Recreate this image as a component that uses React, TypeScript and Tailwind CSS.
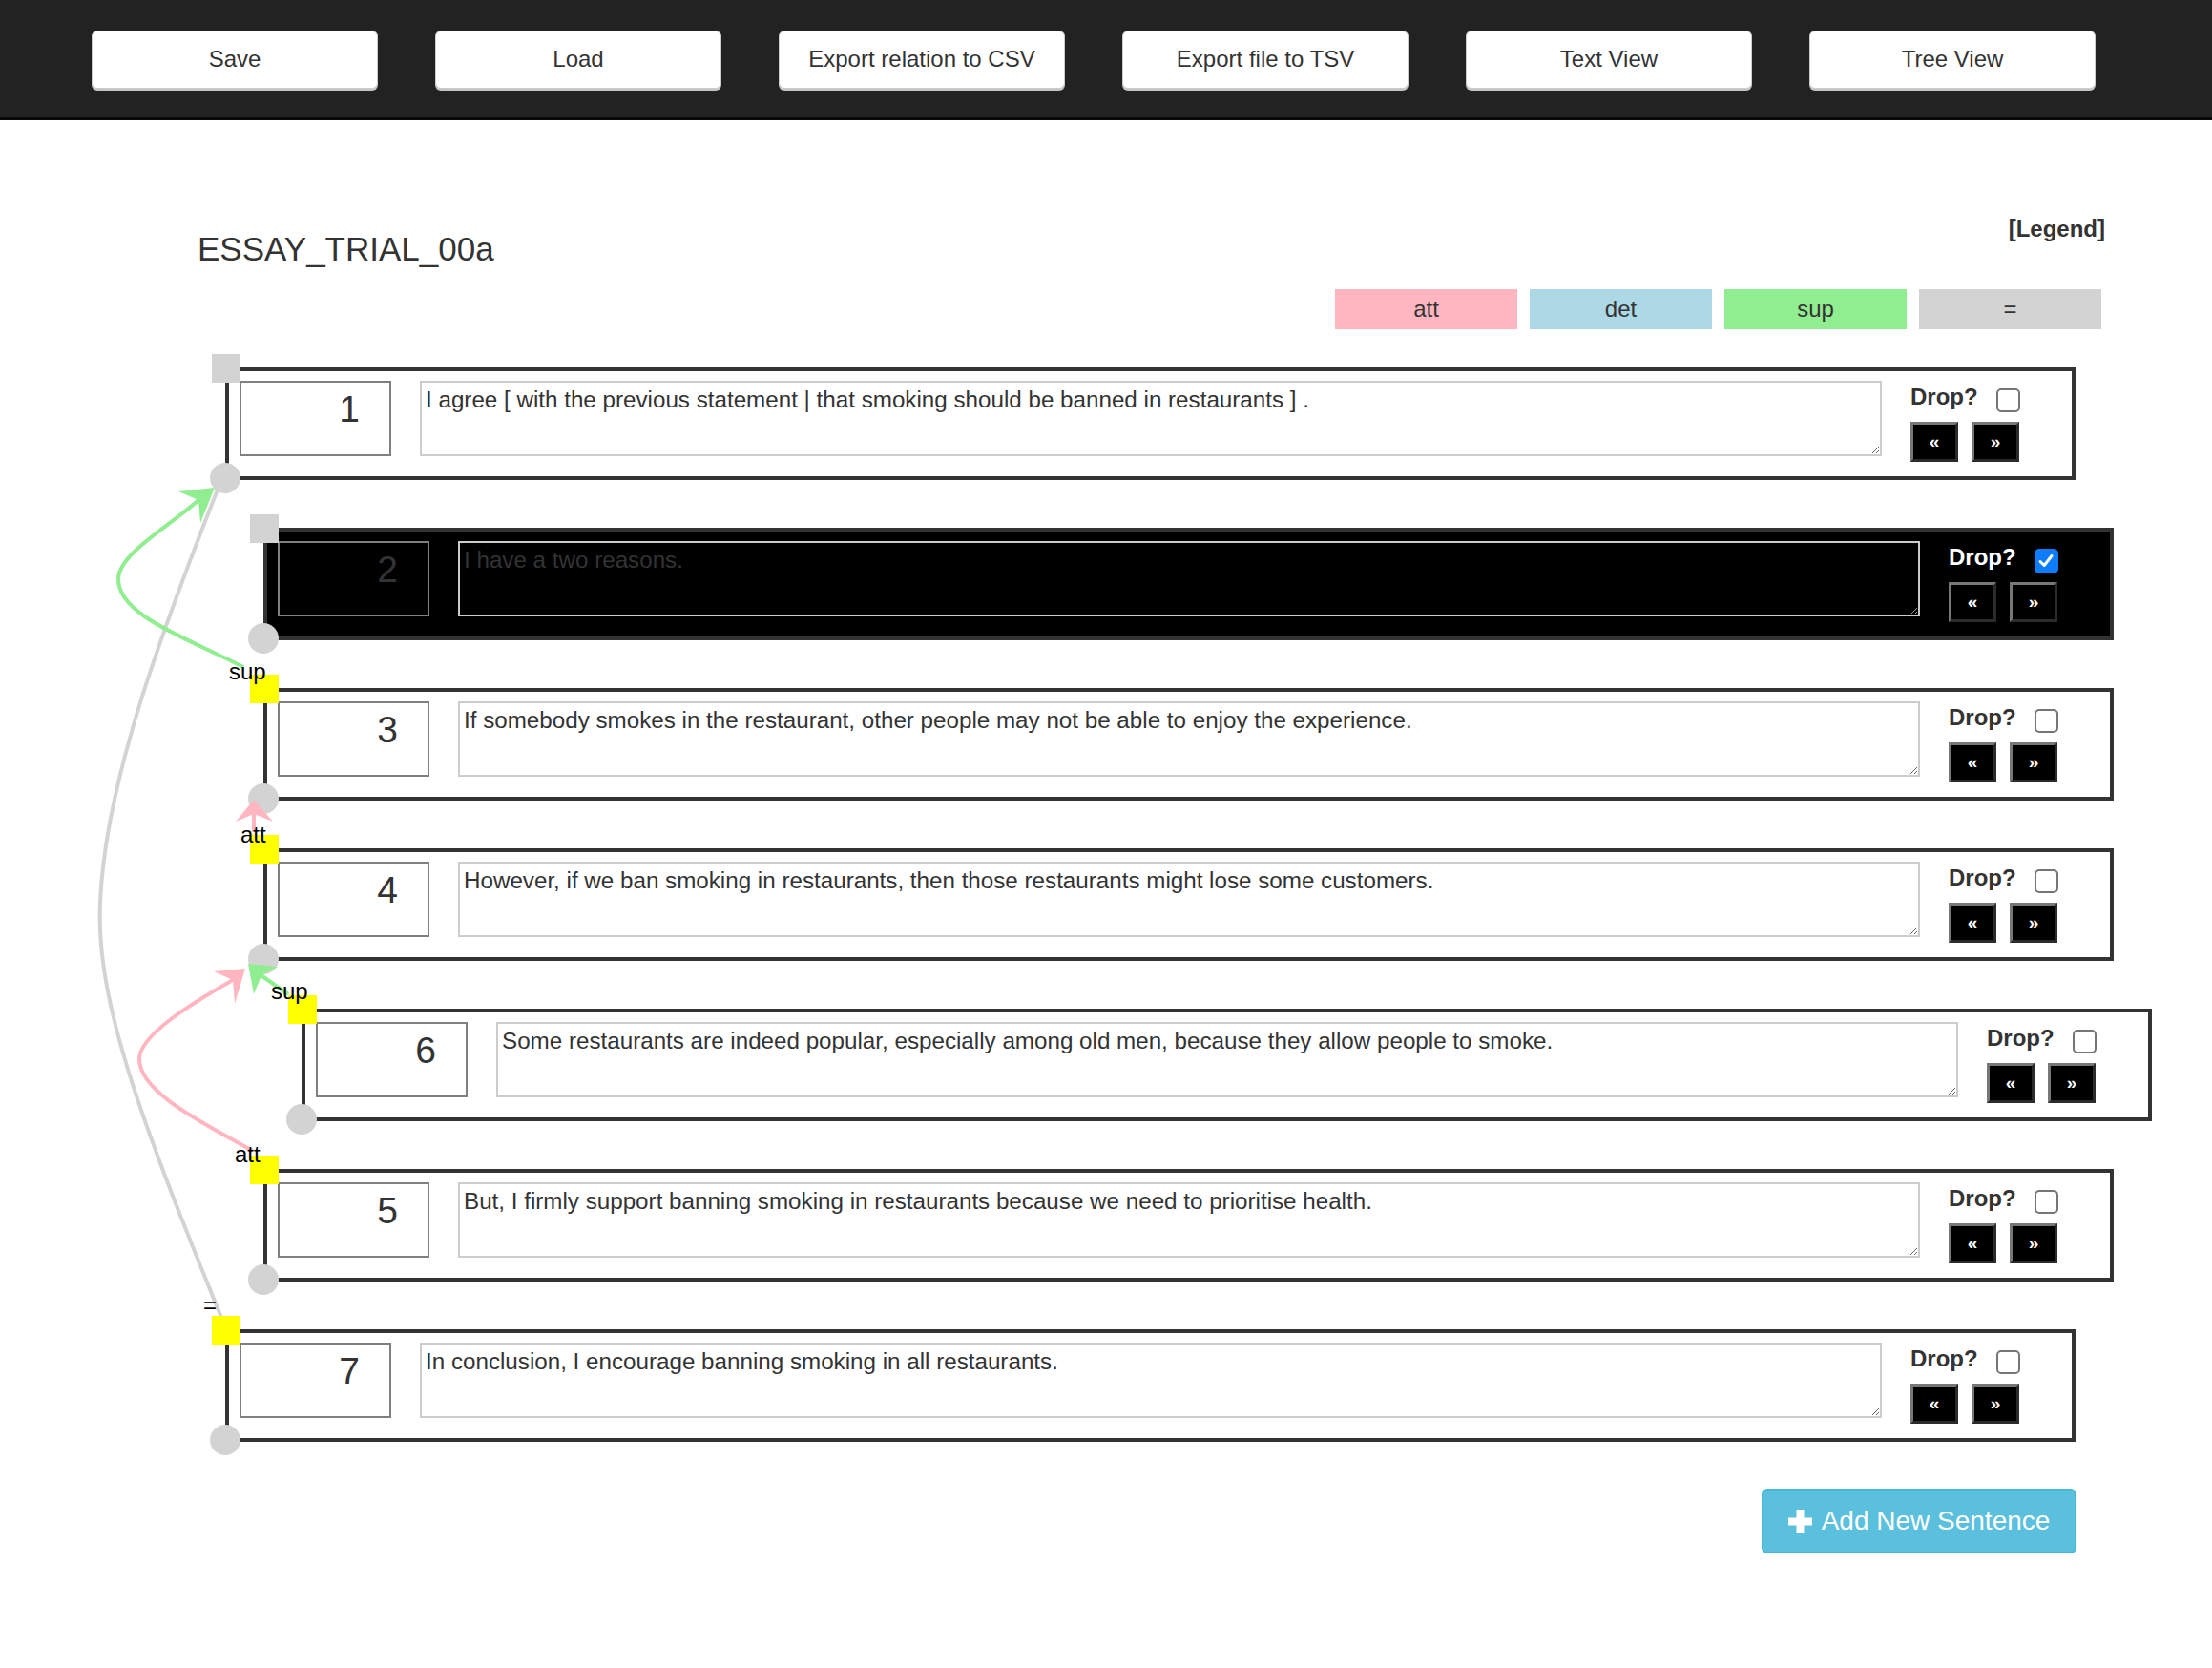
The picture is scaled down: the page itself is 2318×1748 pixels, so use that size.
import React from "react";

type Row = {
  n: number;
  indent: string;
  text: string;
  dropped?: boolean;
  linked: boolean;
  label?: { text: string; pos: string };
};

const rows: Row[] = [
  {
    n: 1,
    indent: "ml-0",
    text: "I agree [ with the previous statement | that smoking should be banned in restaurants ] .",
    linked: false,
  },
  { n: 2, indent: "ml-[40px]", text: "I have a two reasons.", dropped: true, linked: false },
  {
    n: 3,
    indent: "ml-[40px]",
    text: "If somebody smokes in the restaurant, other people may not be able to enjoy the experience.",
    linked: true,
    label: { text: "sup", pos: "-left-[40px] -top-[33px]" },
  },
  {
    n: 4,
    indent: "ml-[40px]",
    text: "However, if we ban smoking in restaurants, then those restaurants might lose some customers.",
    linked: true,
    label: { text: "att", pos: "-left-[28px] -top-[30px]" },
  },
  {
    n: 6,
    indent: "ml-[80px]",
    text: "Some restaurants are indeed popular, especially among old men, because they allow people to smoke.",
    linked: true,
    label: { text: "sup", pos: "-left-[36px] -top-[34px]" },
  },
  {
    n: 5,
    indent: "ml-[40px]",
    text: "But, I firmly support banning smoking in restaurants because we need to prioritise health.",
    linked: true,
    label: { text: "att", pos: "-left-[34px] -top-[31px]" },
  },
  {
    n: 7,
    indent: "ml-0",
    text: "In conclusion, I encourage banning smoking in all restaurants.",
    linked: true,
    label: { text: "=", pos: "-left-[27px] -top-[41px]" },
  },
];

const menu = ["Save", "Load", "Export relation to CSV", "Export file to TSV", "Text View", "Tree View"];

const legend = [
  { name: "att", bg: "bg-[#ffb6c1]" },
  { name: "det", bg: "bg-[#add8e6]" },
  { name: "sup", bg: "bg-[#90ee90]" },
  { name: "=", bg: "bg-[#d3d3d3]" },
];

function MoveButton({ glyph }: { glyph: string }) {
  return (
    <button className="flex h-[42px] w-[50px] items-center justify-center border-[3px] border-t-[#777] border-l-[#777] border-b-[#2b2b2b] border-r-[#2b2b2b] bg-black pb-[2px] text-[19px] font-bold leading-none text-white">
      {glyph}
    </button>
  );
}

function SentenceRow({ row }: { row: Row }) {
  const dark = row.dropped;
  return (
    <div
      className={`relative flex h-[118px] w-[1939px] items-start border-4 border-[#333] pt-[10px] pl-[11px] pr-[54px] ${row.indent} ${
        dark ? "bg-black" : "bg-white"
      }`}
    >
      <span
        className={`absolute -top-[18px] -left-[18px] z-[10] h-[30px] w-[30px] ${
          row.linked ? "bg-[#ffff00]" : "bg-[#d3d3d3]"
        }`}
      />
      <span className="absolute -bottom-[18px] -left-[20px] z-[1] h-[32px] w-[32px] rounded-full bg-[#d3d3d3]" />
      {row.label && (
        <span className={`absolute z-[10] text-[24px] leading-none text-black ${row.label.pos}`}>{row.label.text}</span>
      )}

      <div className="flex h-[79px] w-[159px] shrink-0 justify-end border-2 border-[#808080] pt-[8px] pr-[31px] text-[39px] leading-none text-[#333]">
        {row.n}
      </div>

      <textarea
        readOnly
        defaultValue={row.text}
        className={`ml-[30px] h-[79px] min-w-0 flex-1 border-2 border-[#ccc] pt-[4px] pl-[4px] text-[24.2px] leading-[1.15] text-[#333] outline-none ${
          dark ? "bg-black" : "bg-white"
        }`}
      />

      <div className="ml-[30px] flex w-[115px] shrink-0 flex-col pt-[5px]">
        <div className="flex h-[33px] items-start">
          <span className={`text-[24px] font-bold leading-none ${dark ? "text-white" : "text-[#333]"}`}>Drop?</span>
          {dark ? (
            <span className="ml-[19px] mt-[3px] flex h-[26px] w-[26px] items-center justify-center rounded-[5px] bg-[#0f7cf9]">
              <svg width="18" height="18" viewBox="0 0 18 18">
                <path d="M3 9.5 L7.2 13.5 L15 3.5" fill="none" stroke="white" strokeWidth="3" strokeLinecap="round" strokeLinejoin="round" />
              </svg>
            </span>
          ) : (
            <span className="ml-[19px] mt-[3px] h-[25px] w-[25px] rounded-[5px] border-2 border-[#767676] bg-white" />
          )}
        </div>
        <div className="mt-[5px] flex gap-[14px]">
          <MoveButton glyph="«" />
          <MoveButton glyph="»" />
        </div>
      </div>
    </div>
  );
}

function Relations() {
  return (
    <svg
      className="pointer-events-none absolute left-0 top-0 z-[5] h-[1748px] w-[2318px]"
      viewBox="0 0 2318 1748"
    >
      {/* 7 = 1 */}
      <path
        d="M 237 1393 C 150 1180, 100 1050, 105 946 C 110 820, 170 660, 230 508"
        fill="none"
        stroke="#d3d3d3"
        strokeWidth="4"
      />
      {/* 3 sup 1 */}
      <path
        d="M 255 699 C 195 668, 124 645, 124 607 C 124 580, 180 550, 208 524"
        fill="none"
        stroke="#90ee90"
        strokeWidth="4"
      />
      <polygon points="225,511 187,515 208,524 210,548" fill="#90ee90" />
      {/* 4 att 3 */}
      <path d="M 266 872 L 266 850" fill="none" stroke="#ffb6c1" strokeWidth="4" />
      <polygon points="266,838 286,861 266,853 247,861" fill="#ffb6c1" />
      {/* 5 att 4 */}
      <path
        d="M 265 1206 C 215 1178, 146 1145, 146 1110 C 146 1085, 200 1052, 244 1027"
        fill="none"
        stroke="#ffb6c1"
        strokeWidth="4"
      />
      <polygon points="257,1015 224,1018 244,1027 246,1052" fill="#ffb6c1" />
      {/* 6 sup 4 */}
      <path d="M 302 1042 L 272 1021" fill="none" stroke="#90ee90" strokeWidth="4" />
      <polygon points="260,1010 291,1013 274,1022 266,1042" fill="#90ee90" />
    </svg>
  );
}

export default function App() {
  return (
    <div className="relative h-[1748px] w-full overflow-hidden bg-white font-['Liberation_Sans',Arial,sans-serif] text-[#333]">
      <header className="flex h-[126px] gap-[60px] border-b-[3px] border-[#080808] bg-[#222] pt-[32px] pl-[96px]">
        {menu.map((label) => (
          <button
            key={label}
            className="h-[61px] w-[300px] rounded-[6px] border border-[#ccc] bg-white pb-[2px] text-[24px] leading-none text-[#333] shadow-[0_2px_0_#c4c4c4]"
          >
            {label}
          </button>
        ))}
      </header>

      <main>
        <div className="flex items-start justify-between pt-[102px] pl-[207px] pr-[112px]">
          <h3 className="mt-[15px] text-[35px] leading-none text-[#333]">ESSAY_TRIAL_00a</h3>
          <div className="text-[24px] font-bold leading-none text-[#333]">[Legend]</div>
        </div>

        <div className="mt-[25px] flex justify-end gap-[13px] pr-[116px]">
          {legend.map((item) => (
            <div
              key={item.name}
              className={`flex h-[42px] w-[191px] items-center justify-center text-[24px] leading-none text-[#333] ${item.bg}`}
            >
              {item.name}
            </div>
          ))}
        </div>

        <div className="mt-[40px] flex flex-col gap-[50px] pl-[236px]">
          {rows.map((row) => (
            <SentenceRow key={row.n} row={row} />
          ))}
        </div>

        <div className="flex w-[2176px] justify-end pt-[49px]">
          <button className="flex h-[68px] w-[330px] items-center justify-center gap-[10px] rounded-[6px] border-2 border-[#46b8da] bg-[#5bc0de] text-[28px] leading-none text-white">
            <svg width="25" height="25" viewBox="0 0 25 25">
              <rect x="8.5" y="0" width="8" height="25" fill="white" />
              <rect x="0" y="8.5" width="25" height="8" fill="white" />
            </svg>
            Add New Sentence
          </button>
        </div>
      </main>

      <Relations />
    </div>
  );
}
